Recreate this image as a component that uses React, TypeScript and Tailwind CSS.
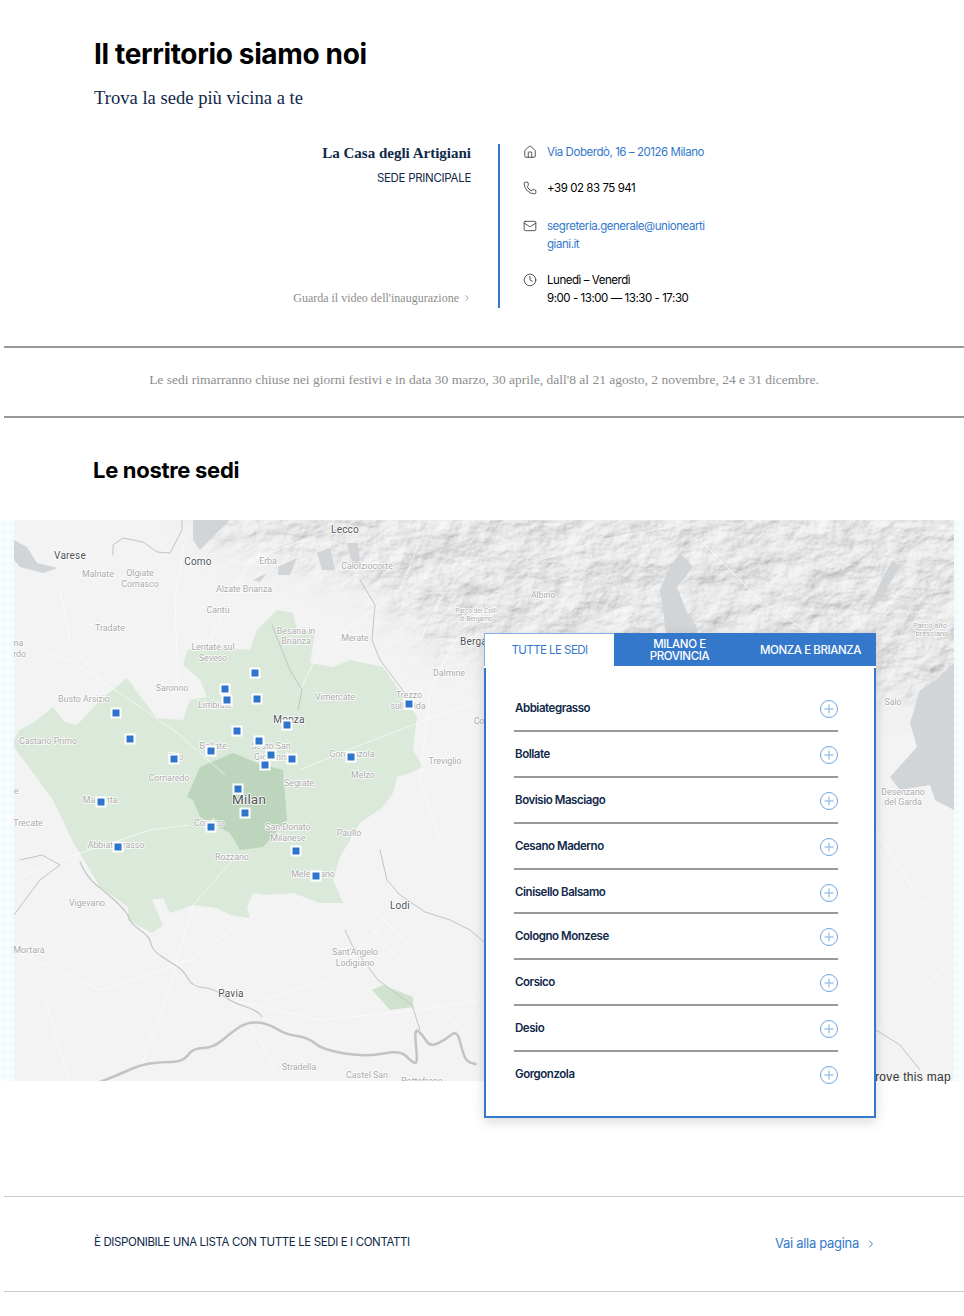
import { ChevronRight, Clock, House, Mail, Phone } from "lucide-react"

const sedi = [
  "Abbiategrasso",
  "Bollate",
  "Bovisio Masciago",
  "Cesano Maderno",
  "Cinisello Balsamo",
  "Cologno Monzese",
  "Corsico",
  "Desio",
  "Gorgonzola",
]

const markers = [
  [255, 673], [225, 689], [227, 700], [257, 699], [116, 713], [130, 739], [237, 731], [287, 725],
  [259, 741], [211, 751], [174, 759], [271, 755], [292, 759], [265, 765], [351, 757], [409, 704],
  [238, 789], [101, 802], [245, 813], [211, 827], [118, 847], [296, 851], [316, 876],
]

const major: [number, number, string, number][] = [
  [70, 555, "Varese", 10], [198, 561, "Como", 10], [345, 529, "Lecco", 10], [289, 719, "Monza", 10],
  [249, 800, "Milan", 13.5], [400, 905, "Lodi", 10], [231, 993, "Pavia", 10], [481, 641, "Bergamo", 10],
]

const minor: [number, number, string, number?][] = [
  [98, 574, "Malnate"], [140, 573, "Olgiate"], [140, 584, "Comasco"], [268, 561, "Erba"],
  [244, 589, "Alzate Brianza"], [367, 566, "Calolziocorte"], [218, 610, "Cantù"], [110, 628, "Tradate"],
  [296, 631, "Besana in"], [296, 641, "Brianza"], [355, 638, "Merate"], [476, 610, "Parco dei Colli", 6.5],
  [476, 618, "di Bergamo", 6.5], [543, 595, "Albino", 8.5], [213, 647, "Lentate sul"], [213, 658, "Seveso"],
  [172, 688, "Saronno"], [84, 699, "Busto Arsizio"], [215, 705, "Limbiate"], [335, 697, "Vimercate"],
  [409, 695, "Trezzo"], [408, 706, "sull'Adda"], [449, 673, "Dalmine"], [490, 721, "Cologno"],
  [445, 761, "Treviglio"], [48, 741, "Castano Primo"], [213, 746, "Bollate"], [176, 757, "Rho"],
  [271, 746, "Sesto San"], [271, 757, "Giovanni"], [352, 754, "Gorgonzola"], [363, 775, "Melzo"],
  [169, 778, "Cornaredo"], [299, 783, "Segrate"], [100, 800, "Magenta"], [209, 823, "Corsico"],
  [288, 827, "San Donato"], [288, 838, "Milanese"], [349, 833, "Paullo"], [116, 845, "Abbiategrasso"],
  [232, 857, "Rozzano"], [313, 874, "Melegnano"], [28, 823, "Trecate"], [87, 903, "Vigevano"],
  [29, 950, "Mortara"], [355, 952, "Sant'Angelo"], [355, 963, "Lodigiano"], [299, 1067, "Stradella"],
  [367, 1075, "Castel San"], [422, 1081, "Rottofreno"], [8, 643, "Somma"], [6, 654, "Lombardo"],
  [4, 791, "Galliate"], [930, 625, "Parco alto", 7.5], [932, 633, "bresciano", 7.5], [893, 702, "Salò"],
  [903, 792, "Desenzano"], [903, 802, "del Garda"],
]

const roads = [
  "M14 640L70 660L130 700L180 735L225 775",
  "M233 860L193 905L170 985L140 1070",
  "M300 690L320 650L400 590L420 540",
  "M190 825L150 830L60 860L14 880",
  "M300 770L360 745L480 700",
  "M178 690L175 600L185 540",
  "M175 640L210 640L250 560L345 525",
  "M60 590L70 640L100 680",
  "M330 870L480 1010",
  "M350 905L470 1040",
  "M14 950L100 990L190 960L260 910",
  "M190 960L231 1000L260 1040L280 1082",
  "M231 1000L320 1020L420 1010L480 1000",
  "M400 905L330 980L260 1000",
  "M45 1000L70 1082",
  "M876 830L920 900L954 920",
  "M876 1030L954 960",
  "M420 640L440 600L470 560",
  "M455 640L430 690L420 780L440 840",
  "M484 600L540 560L600 540L680 525",
  "M700 540L760 600L820 640",
  "M876 620L900 590L954 560",
]

const po = [[100, 1082], [125, 1072], [140, 1065], [160, 1062], [183, 1062], [193, 1048], [213, 1048], [232, 1032], [247, 1022], [267, 1023], [287, 1035], [307, 1037], [323, 1050], [367, 1057], [400, 1050], [412, 1062], [418, 1064], [414, 1028], [422, 1034], [430, 1047], [445, 1040], [457, 1030], [462, 1050], [467, 1063], [484, 1065]]
const ticino = [[80, 862], [87, 878], [107, 893], [128, 913], [130, 923], [150, 937], [152, 950], [170, 962], [183, 970], [193, 987], [213, 988], [233, 1003], [257, 1010], [267, 1023]]

// rounds off a river by going through the midpoints of its segments
function smooth(pts: number[][]) {
  let d = `M${pts[0][0]} ${pts[0][1]}`
  for (let i = 1; i < pts.length - 1; i++) {
    const mx = (pts[i][0] + pts[i + 1][0]) / 2
    const my = (pts[i][1] + pts[i + 1][1]) / 2
    d += `Q${pts[i][0]} ${pts[i][1]} ${mx} ${my}`
  }
  return d
}

function MapDrawing() {
  return (
    <svg viewBox="0 520 964 561" className="block h-[561px] w-[964px]">
      <defs>
        <filter id="hills" x="0" y="0" width="100%" height="100%">
          <feTurbulence type="fractalNoise" baseFrequency="0.028 0.04" numOctaves="6" seed="8" result="n" />
          <feDiffuseLighting in="n" surfaceScale="5" diffuseConstant="1" lightingColor="#ffffff">
            <feDistantLight azimuth="225" elevation="45" />
          </feDiffuseLighting>
        </filter>
        <filter id="soft">
          <feGaussianBlur stdDeviation="22" />
        </filter>
        <mask id="hillMask">
          <path
            d="M180 490L1000 490L1000 720L880 690L760 640L560 660L440 650L380 590L300 560L220 540Z"
            fill="#fff"
            filter="url(#soft)"
          />
        </mask>
        <clipPath id="mapClip">
          <rect x="14" y="520" width="940" height="561" />
        </clipPath>
        <pattern id="dots" width="8" height="8" patternUnits="userSpaceOnUse">
          <rect width="8" height="8" fill="#fbfeff" />
          <path d="M4 0L8 4L4 8L0 4Z" fill="#f1fafd" />
        </pattern>
      </defs>
      <rect x="0" y="520" width="964" height="561" fill="url(#dots)" />
      <g clipPath="url(#mapClip)">
        <rect x="14" y="520" width="940" height="561" fill="#f3f3f3" />
        <rect x="14" y="520" width="940" height="561" filter="url(#hills)" mask="url(#hillMask)" opacity="0.5" />

        <path
          d="M14 740L19 730L33 723L53 707L65 722L77 725L100 700L127 678L143 700L157 718L183 720L190 700L207 697L200 680L183 665L187 650L213 647L250 650L257 630L277 610L293 613L297 630L315 632L310 663L333 667L350 660L383 667L397 687L417 717L413 750L423 767L410 773L397 777L393 793L383 807L360 823L340 857L333 880L343 903L320 903L293 893L267 895L253 893L247 907L250 918L230 915L217 908L193 905L170 913L163 898L152 900L163 925L152 933L128 920L128 907L100 887L82 857L72 840L53 800L14 747Z"
          fill="#dae9d9"
        />
        <path
          d="M200 767L233 753L257 763L283 770L287 820L263 847L240 850L230 833L200 817L193 800L187 797Z"
          fill="#bdd5bc"
        />
        <path d="M372 990L383 985L413 997L413 1007L390 1010Z" fill="#cfe2cd" />

        {roads.map((d) => (
          <path key={d} d={d} fill="none" stroke="#ffffff" strokeWidth="1" opacity="0.6" />
        ))}

        <g fill="#d1d5d7">
          <path d="M14 540L27 547L37 563L58 568L43 573L20 567L14 560Z" />
          <path d="M193 520L230 520L200 550L193 540Z" />
          <path d="M278 567L297 558L290 575L278 575ZM253 580L267 573L260 582Z" />
          <path d="M317 553L330 548L335 570L322 570ZM347 543L358 543L360 563L352 563Z" />
          <path d="M680 553L693 567L677 587L687 613L697 627L697 640L667 640L660 590L670 567Z" />
          <path d="M893 560L900 567L880 600L867 613L883 577Z" />
          <path d="M954 663L936 680L920 690L910 723L917 747L890 777L900 790L930 785L935 800L954 810Z" />
        </g>

        <g fill="none" stroke="#c2c4c4" strokeLinejoin="round" strokeLinecap="round">
          <path strokeWidth="1" d="M182 520L182 530L170 553L157 552L143 542L123 538L113 545L113 555" />
          <path strokeWidth="1" d="M360 580L375 605L372 640L380 660L395 680L410 700" />
          <path strokeWidth="1" d="M272 625L290 670L302 690L298 710" />
          <path strokeWidth="1.2" d={smooth(ticino)} />
          <path strokeWidth="1" d="M20 860L42 855L60 865L40 880L25 900L14 915" />
          <path strokeWidth="1" d="M345 930L352 945L378 980L412 1005L420 1030" />
          <path strokeWidth="1" d="M380 850L387 880L400 895L425 912L450 920L470 930L484 942" />
          <path strokeWidth="1" d="M876 1030L900 1045L920 1070" />
          <path strokeWidth="2.5" d={smooth(po)} />
        </g>

        <g className="font-['Roboto']" textAnchor="middle" paintOrder="stroke" stroke="#ffffff" strokeWidth="1.5" strokeLinejoin="round">
          {minor.map(([x, y, t, s]) => (
            <text key={t} x={x} y={y + 3} fontSize={s ?? 8.8} fill="#a8a8a8">
              {t}
            </text>
          ))}
          {major.map(([x, y, t, s]) => (
            <text key={t} x={x} y={y + 4} fontSize={s} letterSpacing="0.2" fill="#4d5459">
              {t}
            </text>
          ))}
        </g>

        {markers.map(([x, y]) => (
          <rect key={`${x}-${y}`} x={x - 4.5} y={y - 4.5} width="9" height="9" fill="#2f74cc" stroke="#ffffff" strokeWidth="2" />
        ))}
      </g>
    </svg>
  )
}

function PlusIcon() {
  return (
    <svg width="18" height="18" viewBox="0 0 18 18" fill="none" className="mt-0.5 shrink-0">
      <circle cx="9" cy="9" r="8.5" stroke="#6ea5e0" />
      <path d="M9 4.5V13.5M4.5 9H13.5" stroke="#a5c7ec" strokeWidth="1.5" />
    </svg>
  )
}

export default function App() {
  return (
    <div className="min-h-[1316px] w-full bg-white font-['Inter'] text-[#10294a]">
      <div className="pl-[94px] pt-9">
        <h1 className="text-[28px] font-bold leading-9 tracking-[-0.35px] text-black">Il territorio siamo noi</h1>
        <p className="mt-3.5 font-['Liberation_Serif'] text-[18.6px] leading-6 text-[#10294a]">Trova la sede più vicina a te</p>
      </div>

      <div className="mt-[34px] flex h-[164px]">
        <div className="flex w-[471px] flex-col items-end">
          <h3 className="font-['Liberation_Serif'] text-[15px] font-bold leading-[18px] text-[#10294a]">La Casa degli Artigiani</h3>
          <p className="mt-2 text-[11.5px] leading-4 tracking-[-0.3px] text-[#10294a]">SEDE PRINCIPALE</p>
          <a className="mb-0.5 mt-auto flex items-center gap-[3px] font-['Liberation_Serif'] text-xs leading-4 text-[#8d8d8d]">
            Guarda il video dell'inaugurazione
            <ChevronRight size={10} strokeWidth={1.5} className="-mr-px text-[#666]" />
          </a>
        </div>
        <div className="ml-[27px] w-0.5 bg-[#3478cc]" />
        <div className="-mt-px ml-[23px] w-[190px] text-[11.5px] leading-[18px] tracking-[-0.45px]">
          <div className="flex h-[18px] gap-2.5 text-[#3478cc]">
            <House size={14} strokeWidth={1.3} className="mt-0.5 shrink-0 text-[#222]" />
            <span>Via Doberdò, 16 – 20126 Milano</span>
          </div>
          <div className="mt-[18px] flex h-[18px] gap-2.5 text-black">
            <Phone size={14} strokeWidth={1.3} className="mt-0.5 shrink-0 text-[#222]" />
            <span>+39 02 83 75 941</span>
          </div>
          <div className="mt-5 flex gap-2.5 text-[#3478cc]">
            <Mail size={14} strokeWidth={1.3} className="mt-0.5 shrink-0 text-[#222]" />
            <span className="w-[160px] break-all">segreteria.generale@unioneartigiani.it</span>
          </div>
          <div className="mt-[18px] flex gap-2.5 text-black">
            <Clock size={14} strokeWidth={1.3} className="mt-0.5 shrink-0 text-[#222]" />
            <span>
              Lunedì – Venerdì
              <br />
              9:00 - 13:00 — 13:30 - 17:30
            </span>
          </div>
        </div>
      </div>

      <div className="ml-1 mt-[38px] flex h-[72px] items-center justify-center border-y-2 border-[#999999] pb-1 font-['Liberation_Serif'] text-[13.5px] text-[#8d8d8d]">
        Le sedi rimarranno chiuse nei giorni festivi e in data 30 marzo, 30 aprile, dall'8 al 21 agosto, 2 novembre, 24 e 31 dicembre.
      </div>

      <h2 className="ml-[93px] mt-9 text-[22px] font-bold leading-8 tracking-[-0.3px] text-black">Le nostre sedi</h2>

      <div className="relative mt-[34px] h-[561px]">
        <MapDrawing />
        <span className="absolute bottom-[-4px] right-[13px] font-['Liberation_Sans'] text-xs font-medium tracking-[0.3px] text-[#333]">
          Improve this map
        </span>

        <div className="absolute left-[484px] top-[113px] w-[392px] bg-white shadow-[0_4px_12px_rgba(0,0,0,0.15)]">
          <div className="flex h-[33px] text-[11.5px] uppercase leading-[12px]">
            <div className="flex w-[130px] items-center justify-center border-l border-t border-[#7fb0e6] bg-white tracking-[-0.55px] text-[#3478cc]">
              Tutte le sedi
            </div>
            <div className="flex w-[131px] items-center justify-center bg-[#3478cc] text-center font-medium tracking-[-0.4px] text-white">
              Milano e
              <br />
              provincia
            </div>
            <div className="flex w-[131px] items-center justify-center bg-[#3478cc] font-medium tracking-[-0.4px] text-white">
              Monza e Brianza
            </div>
          </div>
          <div className="mt-0.5 border-2 border-t-0 border-[#3478cc] bg-white pb-[18px] pl-7 pr-9 pt-[18px]">
            {sedi.map((s, i) => (
              <div
                key={s}
                className={`flex items-center justify-between ${i === 4 ? "h-[44px] pt-0.5" : "h-[46px]"} ${i < sedi.length - 1 ? "border-b-2 border-[#999999]" : "pb-0.5"}`}
              >
                <span className="mt-0.5 pl-px text-[11.5px] font-semibold tracking-[-0.45px] text-[#10294a]">{s}</span>
                <PlusIcon />
              </div>
            ))}
          </div>
        </div>
      </div>

      <div className="ml-1 mt-[115px] flex h-24 items-center justify-between border-y border-[#cccccc] pl-[90px] pr-[87px]">
        <p className="-mt-[3px] text-[11.5px] uppercase tracking-[-0.38px] text-[#10294a]">È disponibile una lista con tutte le sedi e i contatti</p>
        <a className="flex items-center gap-1.5 text-[13px] tracking-[-0.3px] text-[#3478cc]">
          Vai alla pagina
          <ChevronRight size={12} strokeWidth={2} />
        </a>
      </div>
    </div>
  )
}
